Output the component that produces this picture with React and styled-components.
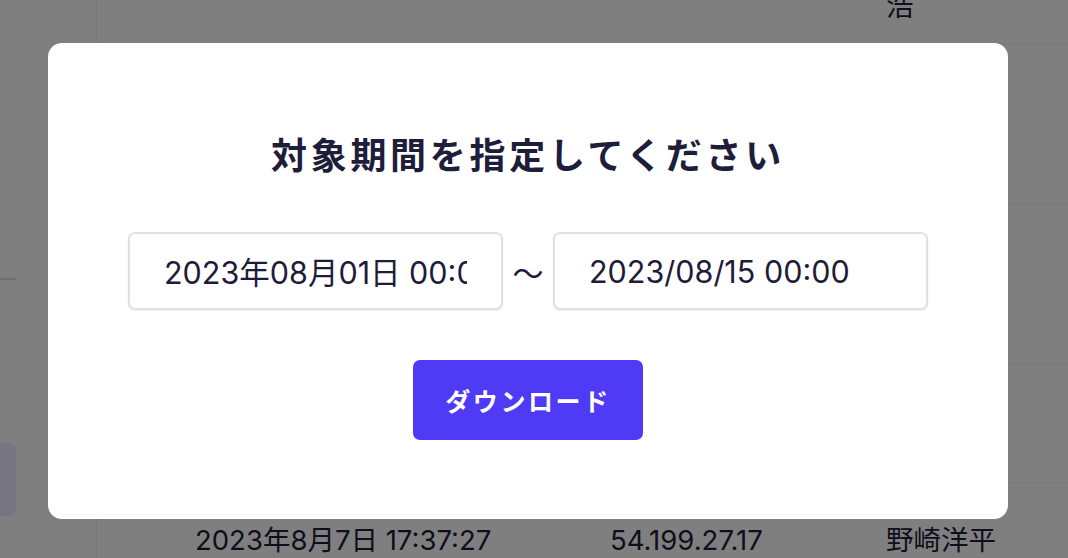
import React from 'react'
import styled, { createGlobalStyle } from 'styled-components'

const GlobalStyle = createGlobalStyle`
    html, body {
        margin: 0;
        padding: 0;
        overflow: hidden;
    }
    body {
        font-family: 'Inter', 'Noto Sans CJK JP', sans-serif;
        color: #1e1c39;
        background: #fff;
    }
    * {
        box-sizing: border-box;
    }
`

const Page = styled.div`
    display: flex;
    width: 100%;
    height: 558px;
    background: #fff;
    overflow: hidden;
`

const Sidebar = styled.div`
    width: 97px;
    flex-shrink: 0;
    border-right: 1px solid #efefef;
    display: flex;
    flex-direction: column;
`

const SideDivider = styled.div`
    width: 16px;
    height: 2px;
    margin-top: 278px;
    background: #dcdcdc;
`

const SideItem = styled.div`
    width: 16px;
    height: 73px;
    margin-top: 163px;
    border-radius: 0 7px 7px 0;
    background: #eeeafe;
`

const Main = styled.div`
    flex: 1;
    display: flex;
    flex-direction: column;
`

const Row = styled.div`
    display: grid;
    grid-template-columns: 98px 415px 276px 1fr;
    align-items: flex-start;
    flex-shrink: 0;
    height: ${(p) => p.height}px;
    padding-top: ${(p) => p.pad || 0}px;
    border-bottom: 1px solid #f1f1f1;
    font-size: 27.5px;
    line-height: 36px;
    color: #1e1c39;
    white-space: nowrap;
    overflow: hidden;
`

const Cell = styled.div`
    margin-top: ${(p) => p.shift || 0}px;
`

const Overlay = styled.div`
    position: fixed;
    inset: 0;
    background: rgba(0, 0, 0, 0.5);
    display: flex;
    align-items: flex-start;
    padding: 43px 0 0 48px;
`

const Modal = styled.div`
    width: 960px;
    height: 476px;
    background: #fff;
    border-radius: 14px;
    display: flex;
    flex-direction: column;
    align-items: center;
    padding-top: 86px;
`

const Title = styled.h2`
    margin: 0;
    font-size: 36px;
    line-height: 54px;
    font-weight: 700;
    letter-spacing: 3.7px;
    color: #1e1d3a;
`

const RangeRow = styled.div`
    display: flex;
    align-items: center;
    gap: 9px;
    margin-top: 49px;
`

const DateInput = styled.input`
    width: 375px;
    height: 78px;
    padding: 0 34px;
    border: 2px solid #e1e1e1;
    border-radius: 7px;
    box-shadow: 0 1px 2px rgba(0, 0, 0, 0.07);
    font-family: 'Inter', 'Noto Sans CJK JP', sans-serif;
    font-size: 30.5px;
    color: #1e1c39;
    background: #fff;
    outline: none;
`

const Tilde = styled.span`
    width: 32px;
    text-align: center;
    font-size: 31px;
    color: #1e1c39;
    font-family: 'Noto Sans CJK JP', sans-serif;
`

const DownloadButton = styled.button`
    width: 230px;
    height: 80px;
    margin-top: 50px;
    border: none;
    border-radius: 7px;
    background: #4f3af6;
    color: #fff;
    font-family: 'Noto Sans CJK JP', sans-serif;
    font-size: 25px;
    font-weight: 700;
    letter-spacing: 2.6px;
    cursor: pointer;
`

export default function App() {
    return (
        <>
            <GlobalStyle />
            <Page>
                <Sidebar>
                    <SideDivider />
                    <SideItem />
                </Sidebar>
                <Main>
                    <Row height={44}>
                        <Cell />
                        <Cell />
                        <Cell />
                        <Cell shift={-12}>浩</Cell>
                    </Row>
                    <Row height={160} />
                    <Row height={161} />
                    <Row height={118} />
                    <Row height={100} pad={39}>
                        <Cell />
                        <Cell>2023年8月7日 17:37:27</Cell>
                        <Cell>54.199.27.17</Cell>
                        <Cell>野崎洋平</Cell>
                    </Row>
                </Main>
            </Page>
            <Overlay>
                <Modal>
                    <Title>対象期間を指定してください</Title>
                    <RangeRow>
                        <DateInput readOnly value="2023年08月01日 00:00" />
                        <Tilde>～</Tilde>
                        <DateInput readOnly value="2023/08/15 00:00" />
                    </RangeRow>
                    <DownloadButton>ダウンロード</DownloadButton>
                </Modal>
            </Overlay>
        </>
    )
}
